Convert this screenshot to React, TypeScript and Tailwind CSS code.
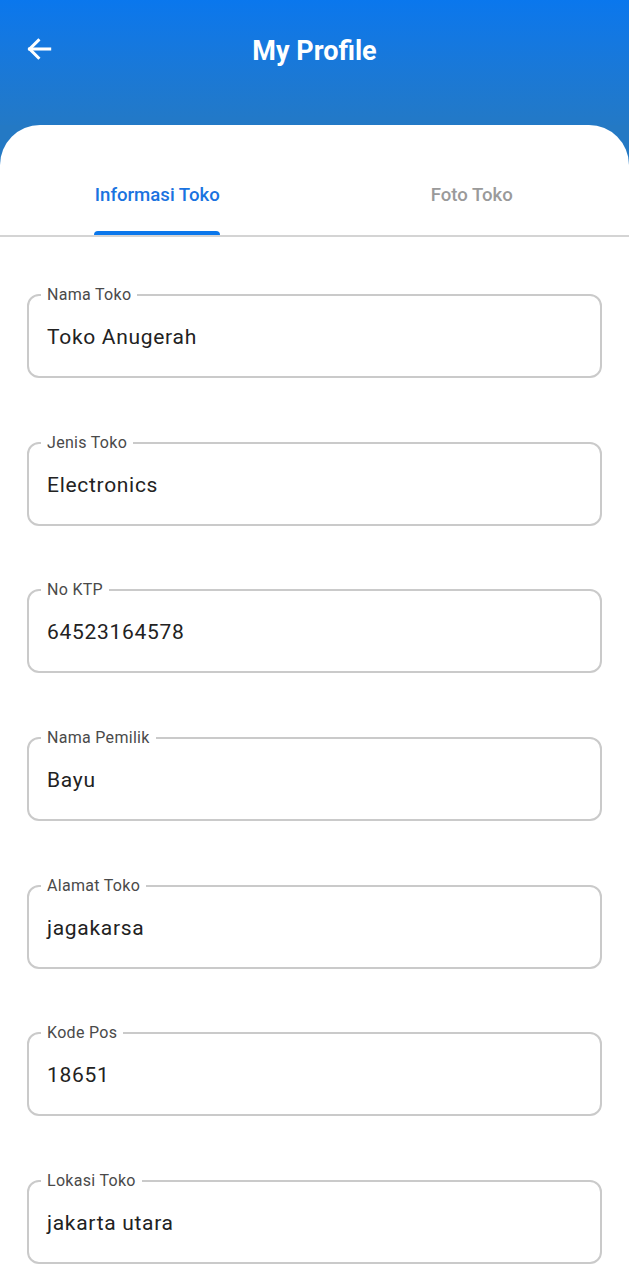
import React from 'react';

const fields = [
  { label: 'Nama Toko', value: 'Toko Anugerah' },
  { label: 'Jenis Toko', value: 'Electronics' },
  { label: 'No KTP', value: '64523164578' },
  { label: 'Nama Pemilik', value: 'Bayu' },
  { label: 'Alamat Toko', value: 'jagakarsa' },
  { label: 'Kode Pos', value: '18651' },
  { label: 'Lokasi Toko', value: 'jakarta utara' },
];

function Field({ label, value }: { label: string; value: string }) {
  return (
    <fieldset className="rounded-[12px] border-2 border-[#cacaca] px-[18px] pb-[25px]">
      <legend className="ml-[-6px] px-[6px] text-[16px] leading-[18px] tracking-[0.3px] text-[#4a4a4a]">
        {label}
      </legend>
      <div className="pt-[19px] text-[21px] leading-[28px] tracking-[0.7px] text-[#222]">{value}</div>
    </fieldset>
  );
}

export default function App() {
  return (
    <div
      className="min-h-[1280px] w-full bg-[#2479c4]"
      style={{ fontFamily: 'Roboto, "Liberation Sans", sans-serif' }}
    >
      {/* App bar */}
      <div className="relative flex h-[125px] items-start justify-center bg-gradient-to-b from-[#0a77ed] to-[#2379c6] pt-[32px]">
        <button className="absolute left-[23px] top-[33px] text-white">
          <svg width="32" height="32" viewBox="0 0 24 24" fill="none" stroke="currentColor" strokeWidth="2.3" strokeLinecap="square">
            <path d="M20 12H5" />
            <path d="M11.5 5.5L5 12l6.5 6.5" />
          </svg>
        </button>
        <h1 className="text-[27px] font-bold leading-[38px] text-white">My Profile</h1>
      </div>

      {/* Card */}
      <div className="min-h-[1155px] rounded-t-[40px] bg-white">
        <div className="flex border-b-2 border-[#d4d4d4]">
          <div className="flex flex-1 flex-col items-center pt-[57px]">
            <span className="text-[18.6px] font-medium leading-[26px] text-[#1a73e0]">Informasi Toko</span>
            <div className="mt-[23px] h-[4px] w-[126px] rounded-t-[4px] bg-[#0b77eb]" />
          </div>
          <div className="flex flex-1 flex-col items-center pt-[57px]">
            <span className="text-[18.6px] font-medium leading-[26px] text-[#9a9a9a]">Foto Toko</span>
          </div>
        </div>

        <div className="flex flex-col gap-[55.7px] px-[27px] pt-[49px] pb-[20px]">
          {fields.map((f) => (
            <Field key={f.label} label={f.label} value={f.value} />
          ))}
        </div>
      </div>
    </div>
  );
}
